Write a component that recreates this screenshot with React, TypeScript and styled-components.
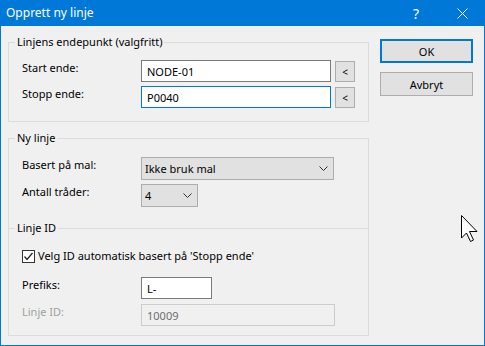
import React from 'react';
import styled, { createGlobalStyle } from 'styled-components';

const GlobalStyle = createGlobalStyle`
  html, body {
    margin: 0;
    padding: 0;
    background: #f0f0f0;
  }
  body {
    font-family: "Noto Sans", "Liberation Sans", sans-serif;
    font-size: 11px;
    color: #000;
  }
`;

const Window = styled.div`
  position: relative;
  width: 485px;
  height: 346px;
  box-sizing: border-box;
  border: 1px solid #0078d7;
  border-top: none;
  background: #f0f0f0;
  display: flex;
  flex-direction: column;
  overflow: hidden;
`;

const TitleBar = styled.div`
  height: 26px;
  margin: 0 -1px;
  background: #0078d7;
  color: #fff;
  display: flex;
  align-items: center;
`;

const Title = styled.div`
  flex: 1;
  padding-left: 6px;
  line-height: 16px;
  font-size: 12px;
`;

const CaptionButton = styled.div`
  width: 46px;
  height: 26px;
  display: flex;
  align-items: center;
  justify-content: center;
  font-size: 14px;
`;

const Body = styled.div`
  display: flex;
  align-items: flex-start;
  padding: 8px 11px 0 7px;
  gap: 11px;
`;

const LeftColumn = styled.div`
  width: 361px;
  display: flex;
  flex-direction: column;
  gap: 8px;
`;

const RightColumn = styled.div`
  width: 93px;
  padding-top: 5px;
  display: flex;
  flex-direction: column;
  gap: 9px;
`;

const Group = styled.fieldset<{ $pt: number; $pb: number }>`
  margin: 0;
  min-width: 0;
  box-sizing: border-box;
  width: 361px;
  border: 1px solid #dcdcdc;
  padding: ${(p) => p.$pt}px 13px ${(p) => p.$pb}px 13px;
  display: flex;
  flex-direction: column;
`;

const Legend = styled.legend`
  margin-left: -7px;
  padding: 0 2px;
  line-height: 16px;
`;

const Row = styled.div<{ $gap?: number }>`
  display: flex;
  align-items: flex-start;
  margin-top: ${(p) => p.$gap ?? 0}px;
`;

const Label = styled.div<{ $disabled?: boolean }>`
  width: 119px;
  flex-shrink: 0;
  line-height: 16px;
  color: ${(p) => (p.$disabled ? '#a0a0a0' : '#000')};
`;

const TextBox = styled.input<{ $w: number; $focus?: boolean; $disabled?: boolean }>`
  width: ${(p) => p.$w}px;
  height: 22px;
  box-sizing: border-box;
  margin: 0;
  padding: 0 5px;
  border: 1px solid ${(p) => (p.$focus ? '#0078d7' : p.$disabled ? '#cccccc' : '#7a7a7a')};
  background: ${(p) => (p.$disabled ? '#f0f0f0' : '#fff')};
  color: ${(p) => (p.$disabled ? '#6d6d6d' : '#000')};
  font-family: inherit;
  font-size: 11px;
  outline: none;
`;

const PickButton = styled.div`
  width: 20px;
  height: 21px;
  margin: 1px 0 0 4px;
  box-sizing: border-box;
  border: 1px solid #adadad;
  background: #e1e1e1;
  display: flex;
  align-items: center;
  justify-content: center;
  font-size: 10px;
`;

const Select = styled.div<{ $w: number }>`
  width: ${(p) => p.$w}px;
  height: 23px;
  box-sizing: border-box;
  border: 1px solid #adadad;
  background: #e1e1e1;
  padding: 0 5px 0 3px;
  display: flex;
  align-items: center;
  justify-content: space-between;
`;

const Separator = styled.div`
  display: flex;
  align-items: center;
  margin: 13px -13px 0;
  height: 16px;
`;

const SepLine = styled.div<{ $w?: number }>`
  height: 1px;
  background: #dcdcdc;
  ${(p) => (p.$w ? `width: ${p.$w}px;` : 'flex: 1;')}
`;

const SepLabel = styled.div`
  padding: 0 2px;
  line-height: 16px;
`;

const CheckRow = styled.div`
  display: flex;
  align-items: center;
  gap: 3px;
  margin-top: 12px;
  line-height: 16px;
`;

const CheckBox = styled.div`
  width: 13px;
  height: 13px;
  box-sizing: border-box;
  border: 1px solid #333;
  background: #fff;
  display: flex;
  align-items: center;
  justify-content: center;
`;

const Button = styled.div<{ $default?: boolean }>`
  height: 24px;
  box-sizing: border-box;
  border: ${(p) => (p.$default ? '2px solid #0078d7' : '1px solid #adadad')};
  background: #e1e1e1;
  display: flex;
  align-items: center;
  justify-content: center;
`;

const Cursor = styled.svg`
  position: absolute;
  left: 460px;
  top: 215px;
`;

const Chevron = () => (
  <svg width="9" height="5" viewBox="0 0 9 5">
    <polyline points="0.5,0.5 4.5,4.5 8.5,0.5" fill="none" stroke="#333" strokeWidth="1" />
  </svg>
);

const App = () => {
  return (
    <>
      <GlobalStyle />
      <Window>
        <TitleBar>
          <Title>Opprett ny linje</Title>
          <CaptionButton>?</CaptionButton>
          <CaptionButton>
            <svg width="11" height="11" viewBox="0 0 11 11">
              <path d="M0.5 0.5 L10.5 10.5 M10.5 0.5 L0.5 10.5" stroke="#fff" strokeWidth="1" />
            </svg>
          </CaptionButton>
        </TitleBar>
        <Body>
          <LeftColumn>
            <Group $pt={10} $pb={13}>
              <Legend>Linjens endepunkt (valgfritt)</Legend>
              <Row>
                <Label>Start ende:</Label>
                <TextBox $w={193} defaultValue="NODE-01" />
                <PickButton>&lt;</PickButton>
              </Row>
              <Row $gap={4}>
                <Label>Stopp ende:</Label>
                <TextBox $w={193} $focus defaultValue="P0040" />
                <PickButton>&lt;</PickButton>
              </Row>
            </Group>
            <Group $pt={11} $pb={9}>
              <Legend>Ny linje</Legend>
              <Row>
                <Label>Basert på mal:</Label>
                <Select $w={193}>
                  <span>Ikke bruk mal</span>
                  <Chevron />
                </Select>
              </Row>
              <Row $gap={4}>
                <Label>Antall tråder:</Label>
                <Select $w={57}>
                  <span>4</span>
                  <Chevron />
                </Select>
              </Row>
              <Separator>
                <SepLine $w={6} />
                <SepLabel>Linje ID</SepLabel>
                <SepLine />
              </Separator>
              <CheckRow>
                <CheckBox>
                  <svg width="11" height="11" viewBox="0 0 11 11">
                    <polyline points="1.5,5.5 4,8.5 9.5,2" fill="none" stroke="#222" strokeWidth="1.2" />
                  </svg>
                </CheckBox>
                <span>Velg ID automatisk basert på 'Stopp ende'</span>
              </CheckRow>
              <Row $gap={13}>
                <Label>Prefiks:</Label>
                <TextBox $w={71} defaultValue="L-" />
              </Row>
              <Row $gap={5}>
                <Label $disabled>Linje ID:</Label>
                <TextBox $w={194} $disabled disabled defaultValue="10009" />
              </Row>
            </Group>
          </LeftColumn>
          <RightColumn>
            <Button $default>OK</Button>
            <Button>Avbryt</Button>
          </RightColumn>
        </Body>
        <Cursor width="18" height="28" viewBox="0 0 18 28">
          <path
            d="M0.5 0.5 L0.5 23 L5.5 18 L9.5 26.5 L12.5 25 L8.5 16.5 L16 16.5 Z"
            fill="#fff"
            stroke="#000"
            strokeWidth="1"
            strokeLinejoin="miter"
          />
        </Cursor>
      </Window>
    </>
  );
};

export default App;
